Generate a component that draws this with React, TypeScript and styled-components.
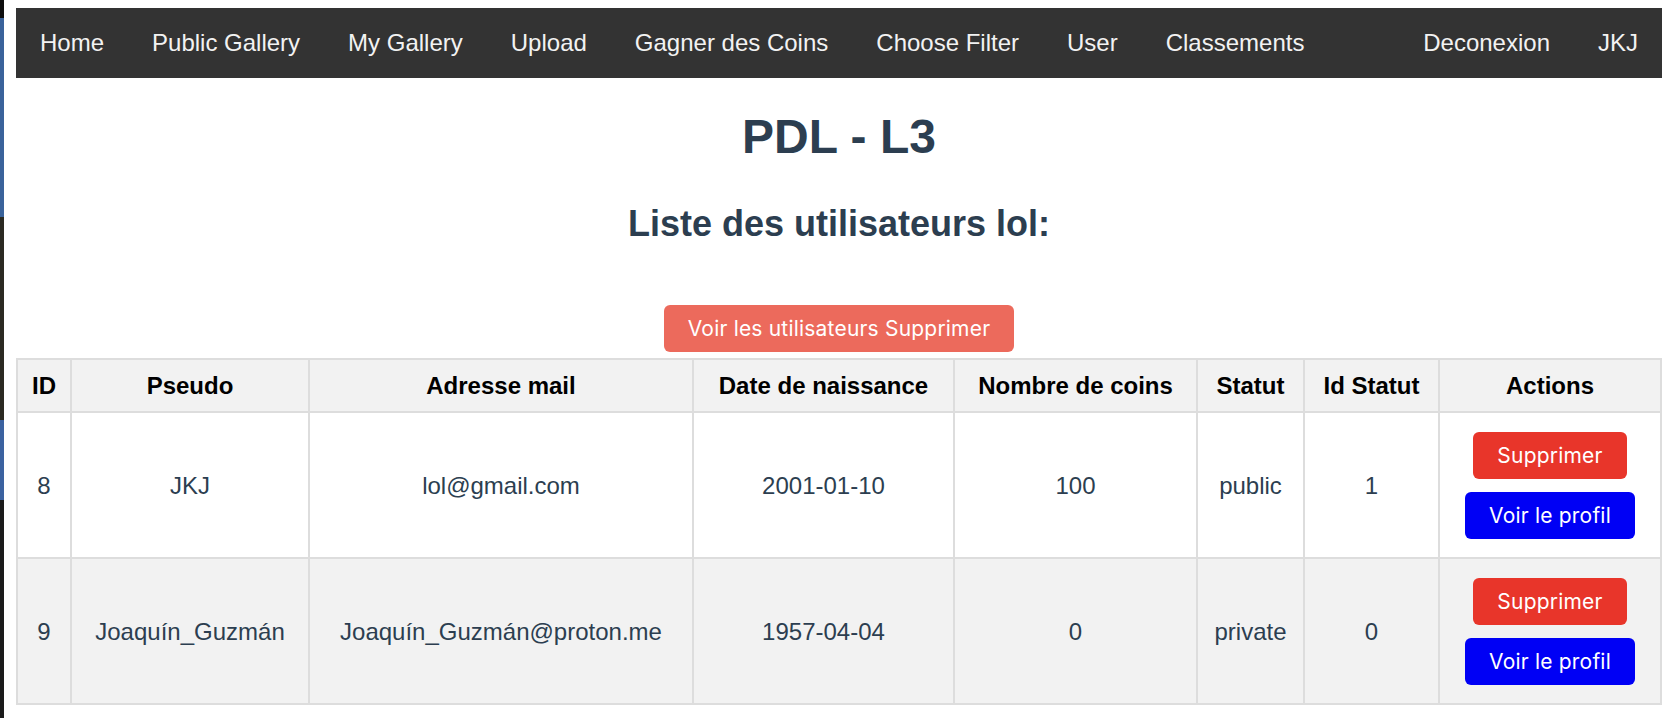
import React from "react";
import styled, { createGlobalStyle } from "styled-components";

const GlobalStyle = createGlobalStyle`
  html, body { margin: 0; padding: 0; background: #ffffff; }
  body { font-family: "Liberation Sans", Arial, Helvetica, sans-serif; }
  * { box-sizing: border-box; }
`;

const Screen = styled.div`
  display: flex;
  min-height: 718px;
`;

const DesktopStrip = styled.div`
  flex: 0 0 4px;
  background: linear-gradient(
    to bottom,
    #0e0e0e 0 18px,
    #3a639b 18px 217px,
    #2b2a22 217px 420px,
    #3b62a0 420px 500px,
    #1b1b1b 500px
  );
`;

const Page = styled.div`
  flex: 1;
  min-width: 0;
  padding: 8px 8px 0 12px;
  color: #2c3e50;
  text-align: center;
  font-family: "Liberation Sans", Arial, Helvetica, sans-serif;
`;

const NavBar = styled.nav`
  display: flex;
  background: #333333;
`;

const NavGroup = styled.div<{ $right?: boolean }>`
  display: flex;
  margin-left: ${(p) => (p.$right ? "auto" : "0")};
`;

const NavLink = styled.a`
  display: block;
  padding: 21px 24px 22px;
  font-size: 24px;
  line-height: 27px;
  color: #f2f2f2;
  text-decoration: none;
  white-space: nowrap;
`;

const Title = styled.h1`
  margin: 31px 0 32px;
  font-size: 48px;
  line-height: 55px;
  font-weight: bold;
  color: #2c3e50;
`;

const Subtitle = styled.h2`
  margin: 39px 0 30px;
  font-size: 36px;
  line-height: 41px;
  font-weight: bold;
  color: #2c3e50;
`;

const ActionBar = styled.div`
  display: flex;
  justify-content: center;
  padding: 31px 0 6px;
`;

const Button = styled.button<{ $tone: "salmon" | "red" | "blue" }>`
  height: 47px;
  padding: 0 24px;
  border: none;
  border-radius: 6px;
  font-family: Inter, "Noto Sans", sans-serif;
  font-size: 21px;
  line-height: 24px;
  letter-spacing: 0.2px;
  color: #ffffff;
  cursor: pointer;
  white-space: nowrap;
  background: ${(p) =>
    p.$tone === "salmon" ? "#ec6a5c" : p.$tone === "red" ? "#e8352a" : "#0000f5"};
`;

const Table = styled.table`
  width: 100%;
  table-layout: fixed;
  border-collapse: collapse;
`;

const Col = styled.col<{ $w: number }>`
  width: ${(p) => p.$w}px;
`;

const HeadCell = styled.th`
  border: 2px solid #dddddd;
  background: #f2f2f2;
  padding: 12px 4px;
  font-size: 24px;
  line-height: 27px;
  font-weight: bold;
  color: #000000;
  text-align: center;
  white-space: nowrap;
`;

const Row = styled.tr<{ $shaded: boolean }>`
  background: ${(p) => (p.$shaded ? "#f2f2f2" : "#ffffff")};
`;

const Cell = styled.td`
  border: 2px solid #dddddd;
  padding: 12px 4px;
  font-size: 24px;
  line-height: 27px;
  color: #2c3e50;
  text-align: center;
  vertical-align: middle;
  white-space: nowrap;
`;

const ActionStack = styled.div`
  display: flex;
  flex-direction: column;
  align-items: center;
  gap: 13px;
  padding: 7px 0 6px;
`;

const navLeft = [
  "Home",
  "Public Gallery",
  "My Gallery",
  "Upload",
  "Gagner des Coins",
  "Choose Filter",
  "User",
  "Classements",
];
const navRight = ["Deconexion", "JKJ"];

const columns: { label: string; w: number }[] = [
  { label: "ID", w: 54 },
  { label: "Pseudo", w: 238 },
  { label: "Adresse mail", w: 384 },
  { label: "Date de naissance", w: 261 },
  { label: "Nombre de coins", w: 243 },
  { label: "Statut", w: 107 },
  { label: "Id Statut", w: 135 },
  { label: "Actions", w: 222 },
];

const users = [
  {
    id: 8,
    pseudo: "JKJ",
    mail: "lol@gmail.com",
    birth: "2001-01-10",
    coins: 100,
    statut: "public",
    idStatut: 1,
  },
  {
    id: 9,
    pseudo: "Joaquín_Guzmán",
    mail: "Joaquín_Guzmán@proton.me",
    birth: "1957-04-04",
    coins: 0,
    statut: "private",
    idStatut: 0,
  },
];

export default function App() {
  return (
    <>
      <GlobalStyle />
      <Screen>
        <DesktopStrip />
        <Page>
          <NavBar>
            <NavGroup>
              {navLeft.map((l) => (
                <NavLink key={l} href="#">
                  {l}
                </NavLink>
              ))}
            </NavGroup>
            <NavGroup $right>
              {navRight.map((l) => (
                <NavLink key={l} href="#">
                  {l}
                </NavLink>
              ))}
            </NavGroup>
          </NavBar>
          <Title>PDL - L3</Title>
          <Subtitle>Liste des utilisateurs lol:</Subtitle>
          <ActionBar>
            <Button $tone="salmon">Voir les utilisateurs Supprimer</Button>
          </ActionBar>
          <Table>
            <colgroup>
              {columns.map((c) => (
                <Col key={c.label} $w={c.w} />
              ))}
            </colgroup>
            <thead>
              <tr>
                {columns.map((c) => (
                  <HeadCell key={c.label}>{c.label}</HeadCell>
                ))}
              </tr>
            </thead>
            <tbody>
              {users.map((u, i) => (
                <Row key={u.id} $shaded={i % 2 === 1}>
                  <Cell>{u.id}</Cell>
                  <Cell>{u.pseudo}</Cell>
                  <Cell>{u.mail}</Cell>
                  <Cell>{u.birth}</Cell>
                  <Cell>{u.coins}</Cell>
                  <Cell>{u.statut}</Cell>
                  <Cell>{u.idStatut}</Cell>
                  <Cell>
                    <ActionStack>
                      <Button $tone="red">Supprimer</Button>
                      <Button $tone="blue">Voir le profil</Button>
                    </ActionStack>
                  </Cell>
                </Row>
              ))}
            </tbody>
          </Table>
        </Page>
      </Screen>
    </>
  );
}
